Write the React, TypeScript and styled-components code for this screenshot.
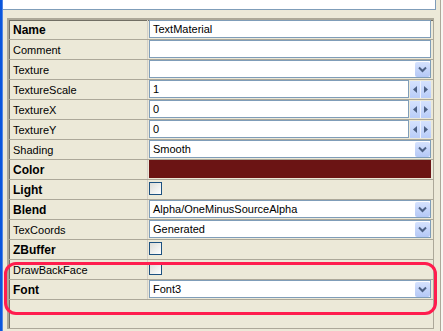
import * as React from 'react'
import styled, { createGlobalStyle } from 'styled-components'

const GlobalStyle = createGlobalStyle`
	html, body {
		margin: 0;
		padding: 0;
		background: #ece9d8;
		font-family: "Liberation Sans", Arial, sans-serif;
		font-size: 11px;
		color: #000;
	}
`

const Page = styled.div`
	position: relative;
	display: flex;
	width: 443px;
	height: 331px;
	overflow: hidden;
	background: #ece9d8;
`

const BlueEdge = styled.div`
	width: 2px;
	background: #0b56dc;
	border-right: 1px solid #4f86e6;
`

const Content = styled.div`
	flex: 1;
	display: flex;
	flex-direction: column;
`

const TopBox = styled.div`
	height: 9px;
	margin-right: 4px;
	background: #fff;
	border-right: 1px solid #7f9db9;
	border-bottom: 1px solid #7f9db9;
`

const RightRail = styled.div`
	width: 2px;
	border-left: 1px solid #aca899;
	background: #f7f6f1;
`

const Grid = styled.div`
	margin: 8px 6px 0 4px;
	height: 308px;
	display: flex;
	flex-direction: column;
	border-top: 2px solid #aca899;
	border-left: 2px solid #aca899;
	border-right: 1px solid #aca899;
	border-bottom: 1px solid #aca899;
	box-shadow: inset 1px 1px 0 #716f64;
`

const Row = styled.div`
	display: grid;
	grid-template-columns: 139px 1fr;
	height: 20px;
	border-bottom: 1px solid #aca899;
	box-sizing: border-box;
`

const Label = styled.div<{ $bold?: boolean }>`
	display: flex;
	align-items: center;
	padding-left: 4px;
	border-right: 1px solid #d4d0c8;
	font-weight: ${({ $bold }) => ($bold ? 'bold' : 'normal')};
	font-size: ${({ $bold }) => ($bold ? '12px' : '11px')};
	white-space: nowrap;
`

const Value = styled.div`
	display: flex;
	align-items: flex-start;
	padding: 0 2px 0 1px;
	gap: 1px;
`

const TextBox = styled.div`
	flex: 1;
	height: 18px;
	box-sizing: border-box;
	background: #fff;
	border: 1px solid #7f9db9;
	padding-left: 3px;
	display: flex;
	align-items: center;
	justify-content: space-between;
	white-space: nowrap;
`

const DropButton = styled.div`
	width: 15px;
	height: 15px;
	margin-right: 0;
	background: linear-gradient(#d5e2fe, #b4c8f6);
	border-radius: 2px;
	display: flex;
	align-items: center;
	justify-content: center;
	align-self: flex-end;
`

const SpinPair = styled.div`
	display: flex;
	height: 17px;
	margin-top: 1px;
	width: 21px;
`

const SpinButton = styled.div`
	flex: 1;
	background: linear-gradient(#d5e2fe, #b9cdf8);
	display: flex;
	align-items: center;
	justify-content: center;
	& + & {
		border-left: 1px solid #eef2fd;
	}
`

const ColorSwatch = styled.div<{ $color: string }>`
	flex: 1;
	height: 18px;
	background: ${({ $color }) => $color};
`

const CheckBox = styled.div`
	width: 11px;
	height: 11px;
	margin-top: 2px;
	border: 1px solid #1c5180;
	background: linear-gradient(135deg, #dcdcd7, #ffffff);
`

const Filler = styled.div`
	flex: 1;
`

const Highlight = styled.div`
	position: absolute;
	left: 4px;
	top: 262px;
	width: 427px;
	height: 47px;
	border: 3px solid #ff1d4e;
	border-radius: 12px;
	pointer-events: none;
`

const Chevron = () => (
	<svg width="9" height="7" viewBox="0 0 9 7">
		<path d="M1 1.5 L4.5 5 L8 1.5" fill="none" stroke="#4d6185" strokeWidth="2" />
	</svg>
)

const Arrow = ({ dir }: { dir: 'left' | 'right' }) => (
	<svg width="4" height="7" viewBox="0 0 4 7">
		<path d={dir === 'left' ? 'M4 0 L0 3.5 L4 7 Z' : 'M0 0 L4 3.5 L0 7 Z'} fill="#4d6185" />
	</svg>
)

type Kind = 'text' | 'combo' | 'spin' | 'color' | 'check'

interface Prop {
	name: string
	bold?: boolean
	kind: Kind
	value?: string
}

const props: Prop[] = [
	{ name: 'Name', bold: true, kind: 'text', value: 'TextMaterial' },
	{ name: 'Comment', kind: 'text', value: '' },
	{ name: 'Texture', kind: 'combo', value: '' },
	{ name: 'TextureScale', kind: 'spin', value: '1' },
	{ name: 'TextureX', kind: 'spin', value: '0' },
	{ name: 'TextureY', kind: 'spin', value: '0' },
	{ name: 'Shading', kind: 'combo', value: 'Smooth' },
	{ name: 'Color', bold: true, kind: 'color', value: '#6b1414' },
	{ name: 'Light', bold: true, kind: 'check' },
	{ name: 'Blend', bold: true, kind: 'combo', value: 'Alpha/OneMinusSourceAlpha' },
	{ name: 'TexCoords', kind: 'combo', value: 'Generated' },
	{ name: 'ZBuffer', bold: true, kind: 'check' },
	{ name: 'DrawBackFace', kind: 'check' },
	{ name: 'Font', bold: true, kind: 'combo', value: 'Font3' },
]

const Editor = ({ p }: { p: Prop }) => {
	switch (p.kind) {
		case 'text':
			return <TextBox>{p.value}</TextBox>
		case 'combo':
			return (
				<TextBox>
					<span>{p.value}</span>
					<DropButton><Chevron /></DropButton>
				</TextBox>
			)
		case 'spin':
			return (
				<>
					<TextBox>{p.value}</TextBox>
					<SpinPair>
						<SpinButton><Arrow dir="left" /></SpinButton>
						<SpinButton><Arrow dir="right" /></SpinButton>
					</SpinPair>
				</>
			)
		case 'color':
			return <ColorSwatch $color={p.value || '#000'} />
		case 'check':
			return <CheckBox />
	}
}

export default function App() {
	return (
		<Page>
			<GlobalStyle />
			<BlueEdge />
			<Content>
				<TopBox />
				<Grid>
					{props.map((p) => (
						<Row key={p.name}>
							<Label $bold={p.bold}>{p.name}</Label>
							<Value><Editor p={p} /></Value>
						</Row>
					))}
					<Filler />
				</Grid>
			</Content>
			<RightRail />
			<Highlight />
		</Page>
	)
}
